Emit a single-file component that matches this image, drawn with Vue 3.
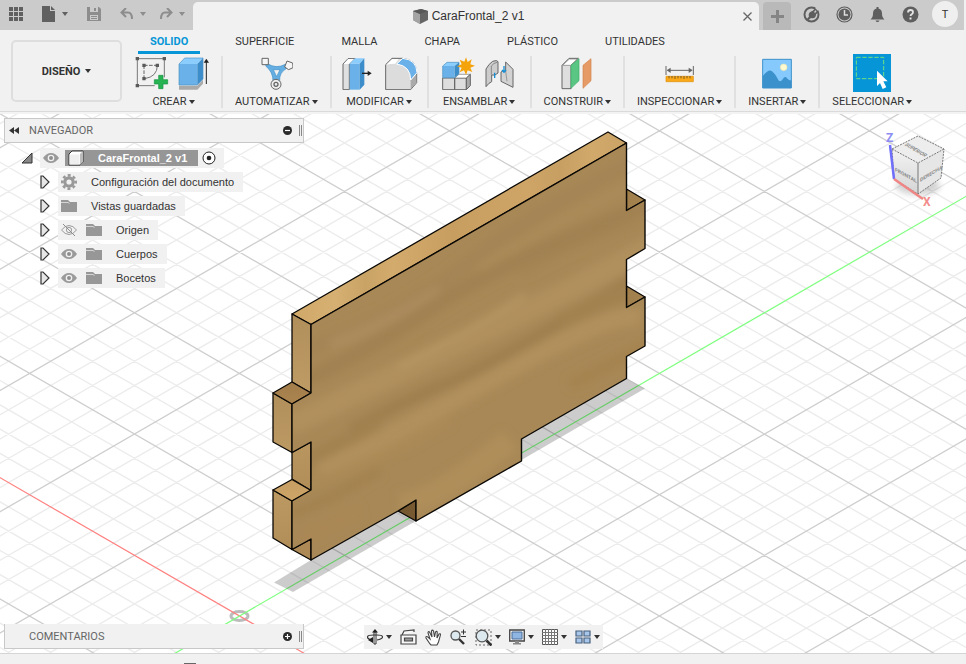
<script setup>
import { ref } from 'vue'

const tabs = ['SOLIDO', 'SUPERFICIE', 'MALLA', 'CHAPA', 'PLÁSTICO', 'UTILIDADES']
const activeTab = ref('SOLIDO')

const nodes = [
  { label: 'Configuración del documento', icons: ['i-gear'] },
  { label: 'Vistas guardadas', icons: ['i-folder'] },
  { label: 'Origen', icons: ['i-eye-off', 'i-folder'] },
  { label: 'Cuerpos', icons: ['i-eye', 'i-folder'] },
  { label: 'Bocetos', icons: ['i-eye', 'i-folder'] },
]

// Isometric floor grid: every fifth line is a major one.
const origin = { x: 239.5, y: 616 }
const slope = 0.5777
const step = 24.26
function gridLines(direction, major) {
  let d = ''
  for (let k = -90; k <= 90; k++) {
    if (k === 0 || (k % 5 === 0) !== major) continue
    const y = (x) => (origin.y + direction * slope * (x - origin.x) + k * step).toFixed(1)
    d += `M-20 ${y(-20)}L2400 ${y(2400)}`
  }
  return d
}
const minorGrid = gridLines(1, false) + gridLines(-1, false)
const majorGrid = gridLines(1, true) + gridLines(-1, true)

// Grain of the wooden board: path, width, colour.
const grain = [
  ['M290 355Q400 318 470 262T660 150', 14, '#a48454'],
  ['M330 345Q390 322 440 290', 12, '#ac8b5d'],
  ['M290 388Q370 350 432 308T660 200', 15, '#a18151'],
  ['M480 268Q560 218 660 172', 9, '#ab8b59'],
  ['M290 425Q400 372 498 325T670 235', 22, '#b0905d'],
  ['M398 367Q462 336 525 295', 5, '#b89864'],
  ['M520 275Q570 245 640 222', 6, '#a48452'],
  ['M350 431Q400 402 450 382T660 262', 12, '#9f7f4e'],
  ['M560 322Q610 298 660 276', 16, '#a2824f'],
  ['M290 468Q340 444 380 424', 14, '#a28250'],
  ['M320 472Q420 420 518 365T640 318', 18, '#b1905d'],
  ['M290 492Q380 460 450 420', 9, '#ac8a57'],
  ['M400 505Q440 500 510 440', 24, '#af8e5a'],
  ['M290 515Q330 500 380 470', 10, '#a38250'],
  ['M300 540Q330 525 360 510', 12, '#aa8754'],
  ['M570 385Q610 365 660 338', 12, '#a5834f'],
]
</script>

<template>
  <div class="app">
    <svg class="defs" aria-hidden="true">
      <symbol id="i-eye" viewBox="0 0 16 16">
        <path d="M0 8Q3.500 3 8 3t8 5q-3.500 5-8 5T0 8z" fill="#9a9a9a" />
        <circle cx="8" cy="8" r="3.300" fill="#f1f1f1" /><circle cx="8" cy="8" r="2" fill="#8f8f8f" />
      </symbol>
      <symbol id="i-eye-off" viewBox="0 0 16 16">
        <path d="M.5 8Q4 3.500 8 3.500T15.500 8Q12 12.500 8 12.500T.5 8z" fill="none" stroke="#9a9a9a" />
        <circle cx="8" cy="8" r="2.600" fill="none" stroke="#9a9a9a" />
        <path d="M2 2l12 12" stroke="#8c8c8c" />
      </symbol>
      <symbol id="i-gear" viewBox="0 0 16 16">
        <circle cx="8" cy="8" r="4.200" fill="none" stroke="#999" stroke-width="3.200" />
        <circle cx="8" cy="8" r="6.700" fill="none" stroke="#999" stroke-width="2.600" stroke-dasharray="2.900 2.360" stroke-dashoffset="1.450" />
      </symbol>
      <symbol id="i-folder" viewBox="0 0 16 16">
        <path d="M0 2h7l2 2h7v10H0z" fill="#979797" /><path d="M0 4.500h7l1.500 1" fill="none" stroke="#d5d5d5" />
      </symbol>
      <symbol id="i-expand" viewBox="0 0 10 14">
        <path d="M1 1h2l6 6-6 6H1z" fill="#e6e6e6" stroke="#333" stroke-width="1.200" />
      </symbol>
    </svg>

    <header class="titlebar">
      <div class="quick">
        <button class="icon-btn" aria-label="Panel de datos">
          <svg width="14" height="14" viewBox="0 0 14 14" fill="#606060"><path d="M0 0h4v4H0zM5 0h4v4H5zM10 0h4v4h-4zM0 5h4v4H0zM5 5h4v4H5zM10 5h4v4h-4zM0 10h4v4H0zM5 10h4v4H5zM10 10h4v4h-4z" /></svg>
        </button>
        <button class="icon-btn file" aria-label="Archivo">
          <svg width="14" height="16" viewBox="0 0 14 16" fill="#606060"><path d="M0 0h8v5h5v11H0zM9 0l4 4H9z" /></svg>
          <span class="caret mid"></span>
        </button>
        <button class="icon-btn save" aria-label="Guardar">
          <svg width="14" height="14" viewBox="0 0 14 14"><path d="M0 0h12l2 2v12H0z" fill="#8d8d8d" /><path d="M3 0h8v5H3zM3 8h8v5H3z" fill="#cbcbcb" /><path d="M7 1h2v3H7zM4 9h6v1H4zM4 11h6v1H4z" fill="#8d8d8d" /></svg>
        </button>
        <button class="icon-btn undo" aria-label="Deshacer">
          <svg width="14" height="12" viewBox="0 0 14 12" fill="none" stroke="#8d8d8d" stroke-width="2"><path d="M6 0L1.500 4.500 6 9M2 4.500h6q4 0 4 6.500" /></svg>
          <span class="caret dim"></span>
        </button>
        <button class="icon-btn redo" aria-label="Rehacer">
          <svg width="14" height="12" viewBox="0 0 14 12" fill="none" stroke="#8d8d8d" stroke-width="2"><path d="M8 0l4.500 4.500L8 9M12 4.500H6q-4 0-4 6.500" /></svg>
          <span class="caret dim"></span>
        </button>
      </div>
      <div class="doc-tab">
        <span class="doc-name">
          <svg width="17" height="17" viewBox="0 0 17 17"><path d="M1 3l8-2 7 2v9l-8 4-7-4z" fill="#666" /><path d="M1 3l7 3v10l-7-4z" fill="#a4a4a4" /><path d="M1 3l8-2 7 2-8 3z" fill="#595959" /></svg>
          CaraFrontal_2 v1
        </span>
        <button class="icon-btn" aria-label="Cerrar">
          <svg width="9" height="9" viewBox="0 0 9 9" stroke="#666" stroke-width="1.300"><path d="M.5.5l8 8M8.500.5l-8 8" /></svg>
        </button>
      </div>
      <button class="new-tab" aria-label="Nuevo diseño">
        <svg width="13" height="13" viewBox="0 0 13 13" fill="#858585"><path d="M5 0h3v5h5v3H8v5H5V8H0V5h5z" /></svg>
      </button>
      <div class="status">
        <button class="icon-btn" aria-label="Extensiones">
          <svg width="17" height="17" viewBox="0 0 17 17"><circle cx="8.500" cy="8.500" r="7" fill="none" stroke="#5e5e5e" stroke-width="2" /><path d="M3 14l3-3.500c-1-3 1-5 3.500-5.500L12 2.500l1.200 1L11 6l1 1 2.500-2.500 1 1.200L13 8.500c0 3-2 4.500-5 3.500l-3.500 3z" fill="#5e5e5e" /><path d="M13 1.500l2.500 2.500" stroke="#cbcbcb" stroke-width="2" /></svg>
        </button>
        <button class="icon-btn" aria-label="Estado de trabajos">
          <svg width="17" height="17" viewBox="0 0 17 17"><circle cx="8.500" cy="8.500" r="7.500" fill="none" stroke="#5e5e5e" stroke-width="1.200" /><circle cx="8.500" cy="8.500" r="6" fill="#5e5e5e" /><path d="M8.500 4v5H12" fill="none" stroke="#ddd" stroke-width="1.500" /></svg>
        </button>
        <button class="icon-btn" aria-label="Notificaciones">
          <svg width="17" height="17" viewBox="0 0 17 17" fill="#5e5e5e"><path d="M7.500 1h2v1.500c2.500.7 3.500 2.500 3.500 5 0 3 .8 4.500 2.500 6h-14C3.200 12 4 10.500 4 7.500c0-2.500 1-4.300 3.500-5zM6.500 14.500h4q-.5 1.500-2 1.500t-2-1.500z" /></svg>
        </button>
        <button class="icon-btn" aria-label="Ayuda">
          <svg width="17" height="17" viewBox="0 0 17 17"><circle cx="8.500" cy="8.500" r="8" fill="#5e5e5e" /><path d="M6 6.500q0-2.500 2.500-2.500T11 6.300q0 1.200-1.200 1.900T8.500 10" fill="none" stroke="#e4e4e4" stroke-width="1.800" /><path d="M7.500 11.500h2v2h-2z" fill="#e4e4e4" /></svg>
        </button>
        <button class="avatar" aria-label="Cuenta">T</button>
      </div>
    </header>

    <section class="ribbon">
      <button class="workspace">DISEÑO <span class="caret"></span></button>
      <div class="ribbon-main">
        <nav class="tabs">
          <button v-for="t in tabs" :key="t" class="tab" :class="{ active: t === activeTab }" @click="activeTab = t">{{ t }}</button>
        </nav>
        <div class="groups">
          <div class="group pair">
            <div class="tools">
              <svg width="34" height="34" viewBox="0 0 102 102">
                <path d="M7 8h81v56M7 8v81h52" fill="none" stroke="#777" stroke-width="3" />
                <path d="M27 28h40M27 28v40" fill="none" stroke="#666" stroke-width="3" stroke-dasharray="11 4" /><path d="M67 28q0 34-38 40" fill="none" stroke="#777" stroke-width="3" />
                <path d="M2 3h10v10H2zM83 3h10v10H83zM2 84h10v10H2zM22 23h10v10H22zM62 23h10v10H62zM22 63h10v10H22z" fill="#5a5a5a" />
                <path d="M71 58h13v13h14v13H84v14H71V84H58V71h13z" fill="#27b352" stroke="#149440" stroke-width="2" />
              </svg>
              <svg width="34" height="34" viewBox="0 0 102 102">
                <path d="M3 89h55l17-18v12l-17 18H3z" fill="#aaa" /><path d="M3 24h55v63H3z" fill="#69b1e8" /><path d="M3 24L20 6h55L58 24z" fill="#8bcdfc" /><path d="M58 24L75 6v63L58 87z" fill="#3d8dca" /><path d="M3 24L20 6h55v63L58 87H3z" fill="none" stroke="#4b91c4" stroke-width="2" />
                <path d="M85 84V14" stroke="#222" stroke-width="3" /><path d="M77 20l8-12 8 12z" fill="#222" />
              </svg>
            </div>
            <button class="group-label">CREAR <span class="caret"></span></button>
          </div>
          <div class="group">
            <div class="tools">
              <svg width="34" height="34" viewBox="0 0 102 102">
                <path d="M24 22q27 18 55 3l4 12Q60 50 62 75l-20 2Q43 48 20 30z" fill="#63aee3" stroke="#438fc5" stroke-width="2" /><path d="M43 41h20L53 62z" fill="#f1f1f1" stroke="#438fc5" stroke-width="2" />
                <path d="M9 7h19v19H9zM84 15l17 6 1 14-13 6-12-8z" fill="#f6f6f6" stroke="#666" stroke-width="3" />
                <circle cx="51" cy="85" r="15" fill="#eee" stroke="#666" stroke-width="3" /><circle cx="51" cy="85" r="6" fill="none" stroke="#666" stroke-width="4" />
              </svg>
            </div>
            <button class="group-label">AUTOMATIZAR <span class="caret"></span></button>
          </div>
          <div class="group pair">
            <div class="tools">
              <svg width="34" height="34" viewBox="0 0 102 102">
                <path d="M6 24L21 8h22L25 24v77H6z" fill="#e0e0e0" stroke="#666" stroke-width="3" /><path d="M8 24h16L38 9H22z" fill="#fff" />
                <path d="M26 23h30v78H26z" fill="#69b1e8" /><path d="M26 23L42 7h28L56 23z" fill="#8bcdfc" /><path d="M56 23L70 7v79l-14 15z" fill="#3d8dca" />
                <path d="M63 52h22" stroke="#222" stroke-width="4" /><path d="M80 44l12 8-12 8z" fill="#222" />
              </svg>
              <svg width="34" height="34" viewBox="0 0 102 102">
                <path d="M5 26L24 7h32q42 4 42 43v30L80 101H5z" fill="#dcdcdc" stroke="#666" stroke-width="3" />
                <path d="M80 73l17-18v25l-17 20z" fill="#aaa" /><path d="M7 26L25 9h19L34 23q-16 0-27 3z" fill="#fff" />
                <path d="M38 24L56 7q42 4 43 43L80 72Q80 30 38 24z" fill="#69b1e8" stroke="#fff" stroke-width="3" />
              </svg>
            </div>
            <button class="group-label">MODIFICAR <span class="caret"></span></button>
          </div>
          <div class="group">
            <div class="tools">
              <svg width="34" height="34" viewBox="0 0 102 102">
                <path d="M5 66h36v35H5zM41 66h35v35H41z" fill="#dedede" stroke="#666" stroke-width="3" /><path d="M41 66l13-11h34L76 66z" fill="#fff" stroke="#777" stroke-width="2" /><path d="M76 66l12-11v34l-12 12z" fill="#aaa" stroke="#666" stroke-width="3" />
                <path d="M5 30h36v35H5z" fill="#69b1e8" /><path d="M5 30l13-11h36L41 30z" fill="#8bcdfc" /><path d="M41 30l13-11v34L41 65z" fill="#3d8dca" /><path d="M5 65V30l13-11h36v34L41 65z" fill="none" stroke="#4b91c4" stroke-width="2" />
                <path d="M75 4l5 14 12-8-4 15 14 4-14 6 6 13-14-5-5 14-6-14-13 6 6-14-14-4 14-6-6-14 14 6z" fill="#f5a30a" />
              </svg>
              <svg width="34" height="34" viewBox="0 0 102 102">
                <path d="M6 92V39q9-16 20-23 14-5 16 1v34l-9 6H23v20q-8 3-17 15z" fill="#ccc" stroke="#666" stroke-width="3" stroke-linejoin="round" /><path d="M22 56V30q5-8 19-12" fill="none" stroke="#888" stroke-width="3" />
                <path d="M65 18l22 22v54L51 76V48q4-5 14-1z" fill="#d2d2d2" stroke="#666" stroke-width="3" stroke-linejoin="round" /><path d="M65 46l4 30" stroke="#999" stroke-width="3" />
                <path d="M32 50v16M60 30v18M54 42l6 7 6-7" fill="none" stroke="#168fd5" stroke-width="4" />
              </svg>
            </div>
            <button class="group-label">ENSAMBLAR <span class="caret"></span></button>
          </div>
          <div class="group">
            <div class="tools">
              <svg width="34" height="34" viewBox="0 0 102 102">
                <path d="M6 28L27 7h28L33 28v70H6z" fill="#dedede" stroke="#666" stroke-width="3" /><path d="M8 28h24L52 9H28z" fill="#fff" stroke="#777" stroke-width="2" />
                <path d="M33 28L57 8v66L33 97z" fill="#59c783" stroke="#3eae69" stroke-width="2" /><path d="M69 28L93 8v66L69 97z" fill="#e69a65" stroke="#d3844d" stroke-width="2" />
              </svg>
            </div>
            <button class="group-label">CONSTRUIR <span class="caret"></span></button>
          </div>
          <div class="group">
            <div class="tools">
              <svg width="34" height="34" viewBox="0 0 102 102">
                <path d="M9 30v27M91 30v27M14 43h72" stroke="#666" stroke-width="3" /><path d="M11 43l12-8v16zM89 43l-12-8v16z" fill="#666" />
                <path d="M9 61h82v16H9z" fill="#fba919" stroke="#df8b00" stroke-width="2" /><path d="M18 60v7M27 60v7M36 60v9M45 60v7M54 60v7M63 60v9M72 60v7M81 60v7" stroke="#7a5b20" stroke-width="3" />
              </svg>
            </div>
            <button class="group-label">INSPECCIONAR <span class="caret"></span></button>
          </div>
          <div class="group">
            <div class="tools">
              <svg width="34" height="34" viewBox="0 0 102 102">
                <path d="M8 10h86v86H8z" fill="#86cafd" /><path d="M8 61q18-24 28-15 9 7 19 26 6 8 13-2 7-12 13-3 8 9 13 5v24H8z" fill="#3b91cb" /><circle cx="71" cy="34" r="10" fill="#fffad0" stroke="#e8e2b0" stroke-width="2" /><path d="M8 10h86v86H8z" fill="none" stroke="#3b91cb" stroke-width="3" />
              </svg>
            </div>
            <button class="group-label">INSERTAR <span class="caret"></span></button>
          </div>
          <div class="group">
            <div class="tools">
              <svg width="38" height="38" viewBox="0 0 114 114">
                <path d="M0 0h114v114H0z" fill="#0696d7" /><path d="M10 10h82v64H10z" fill="none" stroke="#6fe07e" stroke-width="3" stroke-dasharray="13 5" />
                <path d="M72 50l32 32H91l9 18-11 5-8-18-9 9z" fill="#fff" />
              </svg>
            </div>
            <button class="group-label">SELECCIONAR <span class="caret"></span></button>
          </div>
        </div>
      </div>
    </section>

    <main class="viewport">
      <svg class="scene" role="img" aria-label="Modelo CaraFrontal_2">
        <defs>
          <clipPath id="frontClip"><path d="M311 324.500L626.500 143v67.500L645 200v48.500l-18.500 11v48L645 297v49l-18.500 10.500v22L521.500 439v22L416 521v-21l-18 11-87 49v-21l-19 10.500V501l19-11v-48l-19 10.500V404l19-11z" /></clipPath>
          <filter id="soft" x="-20%" y="-20%" width="140%" height="140%"><feGaussianBlur stdDeviation="4" /></filter>
          <linearGradient id="top" x1="0" x2="1"><stop offset="0" stop-color="#d0a969" /><stop offset=".13" stop-color="#d6b072" /><stop offset=".22" stop-color="#c9a366" /><stop offset=".3" stop-color="#d3ab6c" /><stop offset=".48" stop-color="#c89e60" /><stop offset=".7" stop-color="#cfa567" /><stop offset=".8" stop-color="#c79f62" /><stop offset=".9" stop-color="#d1a96b" /><stop offset="1" stop-color="#c9a265" /></linearGradient>
          <linearGradient id="side" x1="0" x2="0" y1="0" y2="1"><stop offset="0" stop-color="#b18f5b" /><stop offset=".5" stop-color="#c09d66" /><stop offset="1" stop-color="#b18d57" /></linearGradient>
          <linearGradient id="ledge" x1="0" x2="0" y1="0" y2="1"><stop offset="0" stop-color="#a37d4a" /><stop offset="1" stop-color="#cea568" /></linearGradient>
          <linearGradient id="dark" x1="0" x2="1"><stop offset="0" stop-color="#74572f" /><stop offset="1" stop-color="#a5834f" /></linearGradient>
        </defs>
        <g transform="translate(0 -114)" fill="none">
          <path :d="minorGrid" stroke="#ececec" stroke-width="1.400" />
          <path :d="majorGrid" stroke="#cecece" stroke-width="1.300" />
          <ellipse cx="239.500" cy="616" rx="8.500" ry="4.500" stroke="#bcbcbc" stroke-width="3" />
          <path d="M-20 466.100L700 882" stroke="#ff8080" stroke-width="1.200" />
          <path d="M100 696.600L2400 -632" stroke="#80ff80" stroke-width="1.200" />
          <path d="M274 582.500L311 560l315-182 19 10.500L293 592z" fill="#000" fill-opacity=".2" />
          <g stroke="#0a0805" stroke-width="1.300" stroke-linejoin="round">
            <path d="M292 314L608 132l18.500 11L311 324.500z" fill="url(#top)" />
            <path d="M292 314l19 10.500V393l-19-11zM292 452.500l19-10.500v48.500L292 479z" fill="url(#side)" />
            <path d="M273 393l19 11v48.500L273 442zM273 490l19 11v48.500L273 538z" fill="url(#side)" />
            <path d="M292 382l19 11-19 11-19-11zM292 479.500l19 11-19 10.500-19-11z" fill="url(#ledge)" />
            <path d="M292 549.500l19-10.500v21z" fill="#ad8955" />
            <path d="M626.500 189l18.500 11-18.500 10.500zM626.500 286l18.500 11-18.500 10.500zM398 511l18-11v21z" fill="url(#dark)" />
          </g>
          <g clip-path="url(#frontClip)">
            <path d="M270 130h380v440H270z" fill="#a88856" />
            <g filter="url(#soft)">
              <path v-for="(g, i) in grain" :key="i" :d="g[0]" :stroke="g[2]" :stroke-width="g[1]" />
            </g>
          </g>
          <path d="M311 324.500L626.500 143v67.500L645 200v48.500l-18.500 11v48L645 297v49l-18.500 10.500v22L521.500 439v22L416 521v-21l-18 11-87 49v-21l-19 10.500V501l19-11v-48l-19 10.500V404l19-11z" stroke="#0a0805" stroke-width="1.400" stroke-linejoin="round" />
        </g>
      </svg>

      <div class="top-row">
        <aside class="browser">
          <div class="panel">
            <svg width="10" height="7" viewBox="0 0 10 7" fill="#333"><path d="M5 0v7L0 3.500zM10 0v7L5 3.500z" /></svg>
            <h2>NAVEGADOR</h2>
            <button class="icon-btn" aria-label="Contraer">
              <svg width="9" height="9" viewBox="0 0 9 9"><circle cx="4.500" cy="4.500" r="4.500" fill="#2b2b2b" /><path d="M2 4.500h5" stroke="#fff" stroke-width="1.200" /></svg>
            </button>
            <span class="grip"></span>
          </div>
          <ul class="tree">
            <li class="root">
              <svg width="12" height="12" viewBox="0 0 12 12"><path d="M11 1v10H1z" fill="#888" stroke="#333" /></svg>
              <span class="root-box">
                <svg width="16" height="16"><use href="#i-eye" /></svg>
                <span class="selected">
                  <svg width="16" height="16" viewBox="0 0 16 16"><path d="M1 4l3-3h11v11l-3 3H1z" fill="#fff" stroke="#333" stroke-linejoin="round" /><path d="M12 4l3-3v11l-3 3z" fill="#bbb" /><path d="M1.500 4.500h10v10h-10z" fill="#eee" /></svg>
                  CaraFrontal_2 v1
                </span>
                <svg width="14" height="14" viewBox="0 0 14 14"><circle cx="7" cy="7" r="6" fill="#fff" stroke="#222" /><circle cx="7" cy="7" r="2.300" fill="#222" /></svg>
              </span>
            </li>
            <li v-for="n in nodes" :key="n.label" class="node">
              <svg width="10" height="14"><use href="#i-expand" /></svg>
              <span class="node-box">
                <svg v-for="i in n.icons" :key="i" width="16" height="16"><use :href="'#' + i" /></svg>
                <span class="node-label">{{ n.label }}</span>
              </span>
            </li>
          </ul>
        </aside>

        <svg class="cube" width="72" height="84" viewBox="0 0 72 84">
          <defs>
            <linearGradient id="cf" x1="0" x2="0" y1="0" y2="1"><stop offset="0" stop-color="#f3f3f3" /><stop offset="1" stop-color="#d5d5d5" /></linearGradient>
            <filter id="cs" x="-50%" y="-50%" width="200%" height="200%"><feGaussianBlur stdDeviation="3" /></filter>
          </defs>
          <ellipse cx="36" cy="58" rx="22" ry="9" fill="#000" opacity=".18" filter="url(#cs)" />
          <path d="M36 35L62 21l-3 29-23 16z" fill="#e6e6e6" /><path d="M10 21l26 14v31L12 51z" fill="url(#cf)" /><path d="M10 21L36 8l26 13-26 14z" fill="#ededed" />
          <path d="M10 21L36 8l26 13-3 29-23 16-24-15zM10 21l26 14 26-14" fill="none" stroke="#777" stroke-dasharray="2 1" />
          <path d="M36 35v31" stroke="#777" />
          <g class="faces" fill="#888">
            <text transform="translate(13 43) skewY(29)">FRONTAL</text>
            <text transform="translate(38 54) skewY(-31)">DERECHA</text>
            <text transform="translate(22 17) rotate(30) skewX(-30)">SUPERIOR</text>
          </g>
          <path d="M8 17l4 34" stroke="#6f6ffb" stroke-width="2.500" /><path d="M12 51l29 20" stroke="#f08585" stroke-width="2.500" />
          <text x="4" y="14" class="axis" fill="#8c8cf2">Z</text><text x="41" y="78" class="axis" fill="#f28c8c">X</text>
        </svg>
      </div>

      <div class="bottom-row">
        <div class="panel comments">
          <h2>COMENTARIOS</h2>
          <button class="icon-btn" aria-label="Añadir comentario">
            <svg width="9" height="9" viewBox="0 0 9 9"><circle cx="4.500" cy="4.500" r="4.500" fill="#2b2b2b" /><path d="M2 4.500h5M4.500 2v5" stroke="#fff" stroke-width="1.200" /></svg>
          </button>
          <span class="grip"></span>
        </div>
        <div class="navbar">
          <button class="icon-btn" aria-label="Órbita">
            <svg width="16" height="16" viewBox="0 0 16 16" fill="none" stroke="#333"><path d="M7 3h2v12H7z" fill="#fff" /><path d="M5 11Q.5 10 .5 8t6.500-2h3q5.500 0 5.500 2t-5.500 3" stroke-width="1.200" /><path d="M8 0l3 3.500H5zM6 8v6l-5-3z" fill="#222" stroke="none" /></svg>
            <span class="caret"></span>
          </button>
          <button class="icon-btn" aria-label="Mirar a">
            <svg width="17" height="16" viewBox="0 0 17 16" fill="#f7f7f7" stroke="#444" stroke-width="1.200"><path d="M2 6l2-4 10-1v2" /><path d="M1 6h15v9H1z" /><path d="M4.500 9h8v3h-8z" fill="#999" /></svg>
          </button>
          <button class="icon-btn" aria-label="Encuadre">
            <svg width="17" height="17" viewBox="0 0 17 17" fill="#fff" stroke="#444" stroke-width="1.100"><path d="M5 15L1 9q-.5-2 1.300-1.300L5 10 3 4q0-2 1.500-1L7 8 6.500 2q.8-1.800 2 0L9.500 8l1-5q1.200-1.300 1.700 0L12 9l2-4q1.500-.8 1.500.8L13.500 13l-1.500 3H6z" /></svg>
          </button>
          <button class="icon-btn" aria-label="Zoom">
            <svg width="17" height="16" viewBox="0 0 17 16"><circle cx="5.500" cy="6.500" r="4.500" fill="#dceaf0" stroke="#555" stroke-width="1.300" /><path d="M9 10l5 5" stroke="#333" stroke-width="2.400" /><path d="M11 3h5M13.500.5v5M11 7.500h5" stroke="#333" /></svg>
          </button>
          <button class="icon-btn" aria-label="Ventana de zoom">
            <svg width="17" height="17" viewBox="0 0 17 17"><path d="M1 1h15v15H1z" fill="none" stroke="#666" stroke-dasharray="2 2" /><circle cx="7" cy="7" r="5.800" fill="#dceaf0" stroke="#555" stroke-width="1.300" /><path d="M11.500 11.500l5 5" stroke="#333" stroke-width="2.600" /></svg>
            <span class="caret"></span>
          </button>
          <button class="icon-btn" aria-label="Configuración de visualización">
            <svg width="16" height="16" viewBox="0 0 16 16"><path d="M.7 1h14.600v11H.7z" fill="#eee" stroke="#444" stroke-width="1.300" /><path d="M3 3h10v7H3z" fill="#8fb5e2" stroke="#4b6e9b" /><path d="M6 12h4v2h2v1.500H4V14h2z" fill="#888" /></svg>
            <span class="caret"></span>
          </button>
          <button class="icon-btn" aria-label="Rejilla">
            <svg width="16" height="16" viewBox="0 0 16 16"><path d="M.5.5h15v15H.5z" fill="#fff" stroke="#555" /><path d="M3.500 0v16M6.500 0v16M9.500 0v16M12.500 0v16M0 3.500h16M0 6.500h16M0 9.500h16M0 12.500h16" stroke="#777" /></svg>
            <span class="caret"></span>
          </button>
          <button class="icon-btn" aria-label="Ventanas gráficas">
            <svg width="16" height="14" viewBox="0 0 16 14" fill="#a8c6ea" stroke="#46607e" stroke-width="1.200"><path d="M1 1h6v5H1zM9 1h6v5H9zM1 8h6v5H1zM9 8h6v5H9z" /></svg>
            <span class="caret"></span>
          </button>
        </div>
      </div>
    </main>

    <footer class="timeline"><span class="handle"></span></footer>
  </div>
</template>

<style>
body {
  margin: 0;
}
</style>

<style scoped>
.app {
  display: flex;
  flex-direction: column;
  min-height: 100vh;
  background: #fff;
  color: #333;
  font-family: Roboto, "Liberation Sans", sans-serif;
  font-size: 11px;
  overflow: hidden;
}
.app * {
  box-sizing: border-box;
}
.defs {
  position: absolute;
  width: 0;
  height: 0;
}
svg {
  display: block;
  flex: none;
}
button {
  border: 0;
  padding: 0;
  background: none;
  color: inherit;
  font: inherit;
}
.icon-btn {
  display: flex;
  align-items: center;
}
.caret {
  display: inline-block;
  border: 3px solid transparent;
  border-top: 4px solid #333;
  border-bottom: 0;
}
.caret.mid {
  border-top-color: #606060;
}
.caret.dim {
  border-top-color: #8d8d8d;
}

.titlebar {
  display: flex;
  height: 30px;
  padding: 2px 6px 0 9px;
  border-right: 2px solid #f1f1f1;
  background: #cbcbcb;
}
.quick {
  display: flex;
  align-items: center;
  width: 184px;
  padding-bottom: 4px;
}
.quick .icon-btn {
  gap: 6px;
}
.file,
.save,
.undo {
  margin-left: 19px;
}
.redo {
  margin-left: 13px;
}
.doc-tab {
  display: flex;
  flex: 1;
  align-items: center;
  padding-right: 7px;
  border-radius: 5px 5px 0 0;
  background: #f1f1f1;
  font-family: "Liberation Sans", sans-serif;
  font-size: 12px;
}
.doc-name {
  display: flex;
  flex: 1;
  align-items: center;
  justify-content: center;
  gap: 3px;
}
.new-tab {
  display: flex;
  align-items: center;
  justify-content: center;
  width: 28px;
  margin: 0 12px 0 4px;
  border-radius: 4px 4px 0 0;
  background: #b9b9b9;
}
.status {
  display: flex;
  align-items: center;
  gap: 16px;
  padding-bottom: 4px;
}
.avatar {
  width: 26px;
  height: 26px;
  margin-left: -3px;
  border-radius: 50%;
  background: #efefef;
}

.ribbon {
  display: flex;
  gap: 4px;
  padding: 0 11px;
  border-bottom: 1px solid #dadada;
  background: #f1f1f1;
}
.workspace {
  display: flex;
  flex: none;
  align-items: center;
  justify-content: center;
  gap: 5px;
  width: 111px;
  height: 62px;
  margin-top: 10px;
  border: 2px solid #dedede;
  border-radius: 5px;
  font-weight: 700;
}
.ribbon-main {
  flex: 1;
}
.tabs {
  display: flex;
  gap: 23px;
  padding-left: 12px;
}
.tab {
  height: 24px;
  padding: 1px 12px 0;
  border-bottom: 3px solid transparent;
}
.tab.active {
  border-color: #0696d7;
  color: #0696d7;
  font-weight: 700;
}
.groups {
  display: flex;
}
.group {
  display: flex;
  flex: none;
  flex-direction: column;
  align-items: center;
  padding: 0 12px;
}
.group.pair {
  padding: 0 9px;
}
.group + .group {
  padding-left: 14px;
  background: linear-gradient(#e0e0e0, #e0e0e0) 0 2px / 2px 52px no-repeat;
}
.group + .pair {
  padding-left: 11px;
}
.tools {
  display: flex;
  align-items: center;
  gap: 9px;
  height: 38px;
}
.group-label {
  display: flex;
  align-items: center;
  gap: 2px;
  height: 19px;
  white-space: nowrap;
}

.viewport {
  position: relative;
  display: flex;
  flex: 1;
  flex-direction: column;
  justify-content: space-between;
  border-top: 2px solid #f3f3f3;
}
.scene {
  position: absolute;
  inset: 0;
  width: 100%;
  height: 100%;
}
.top-row,
.bottom-row {
  position: relative;
  display: flex;
  justify-content: space-between;
  padding: 4px;
}
.panel {
  display: flex;
  align-items: center;
  width: 300px;
  height: 25px;
  padding: 0 1px 0 4px;
  border: 1px solid #c8c8c8;
  background: #f1f1f1;
  color: #666;
}
.panel h2 {
  flex: 1;
  margin: 0 0 0 10px;
  font-size: 11px;
  font-weight: 400;
}
.comments {
  border-top: 0;
}
.comments h2 {
  margin-left: 20px;
}
.grip {
  width: 3px;
  height: 11px;
  margin-left: 7px;
  border: 1px solid #888;
  border-width: 0 1px;
}
.tree {
  display: flex;
  flex-direction: column;
  gap: 4px;
  margin: 5px 0 0;
  padding: 0;
  list-style: none;
  font-family: "Liberation Sans", sans-serif;
}
.root,
.node,
.root-box,
.node-box,
.selected {
  display: flex;
  align-items: center;
}
.root {
  gap: 7px;
  padding-left: 17px;
}
.root-box {
  gap: 4px;
  height: 20px;
  padding: 0 8px 0 3px;
  background: #f1f1f1;
}
.selected {
  gap: 14px;
  height: 16px;
  margin-left: 2px;
  padding: 0 11px 0 3px;
  background: #969696;
  color: #fff;
  font-weight: 700;
}
.node {
  gap: 8px;
  padding-left: 36px;
}
.node-box {
  gap: 9px;
  height: 20px;
  padding: 0 9px 0 3px;
  background: #f1f1f1;
}
.node-label {
  margin-left: 5px;
}
.cube {
  margin: 10px 8px 0 0;
}
.faces {
  font-size: 5px;
  font-weight: 700;
}
.axis {
  font-size: 12px;
  font-weight: 700;
}
.bottom-row {
  display: grid;
  grid-template-columns: 1fr auto 1fr;
  align-items: end;
}
.navbar {
  display: flex;
  align-items: center;
  gap: 8px;
  height: 24px;
  padding: 0 3px;
  background: #f1f1f1;
}
.navbar .icon-btn {
  gap: 3px;
}

.timeline {
  display: flex;
  align-items: flex-end;
  height: 11px;
  padding-left: 184px;
  border-top: 1px solid #d5d5d5;
  background: #f1f1f1;
}
.handle {
  width: 12px;
  height: 1px;
  background: #666;
}
</style>
